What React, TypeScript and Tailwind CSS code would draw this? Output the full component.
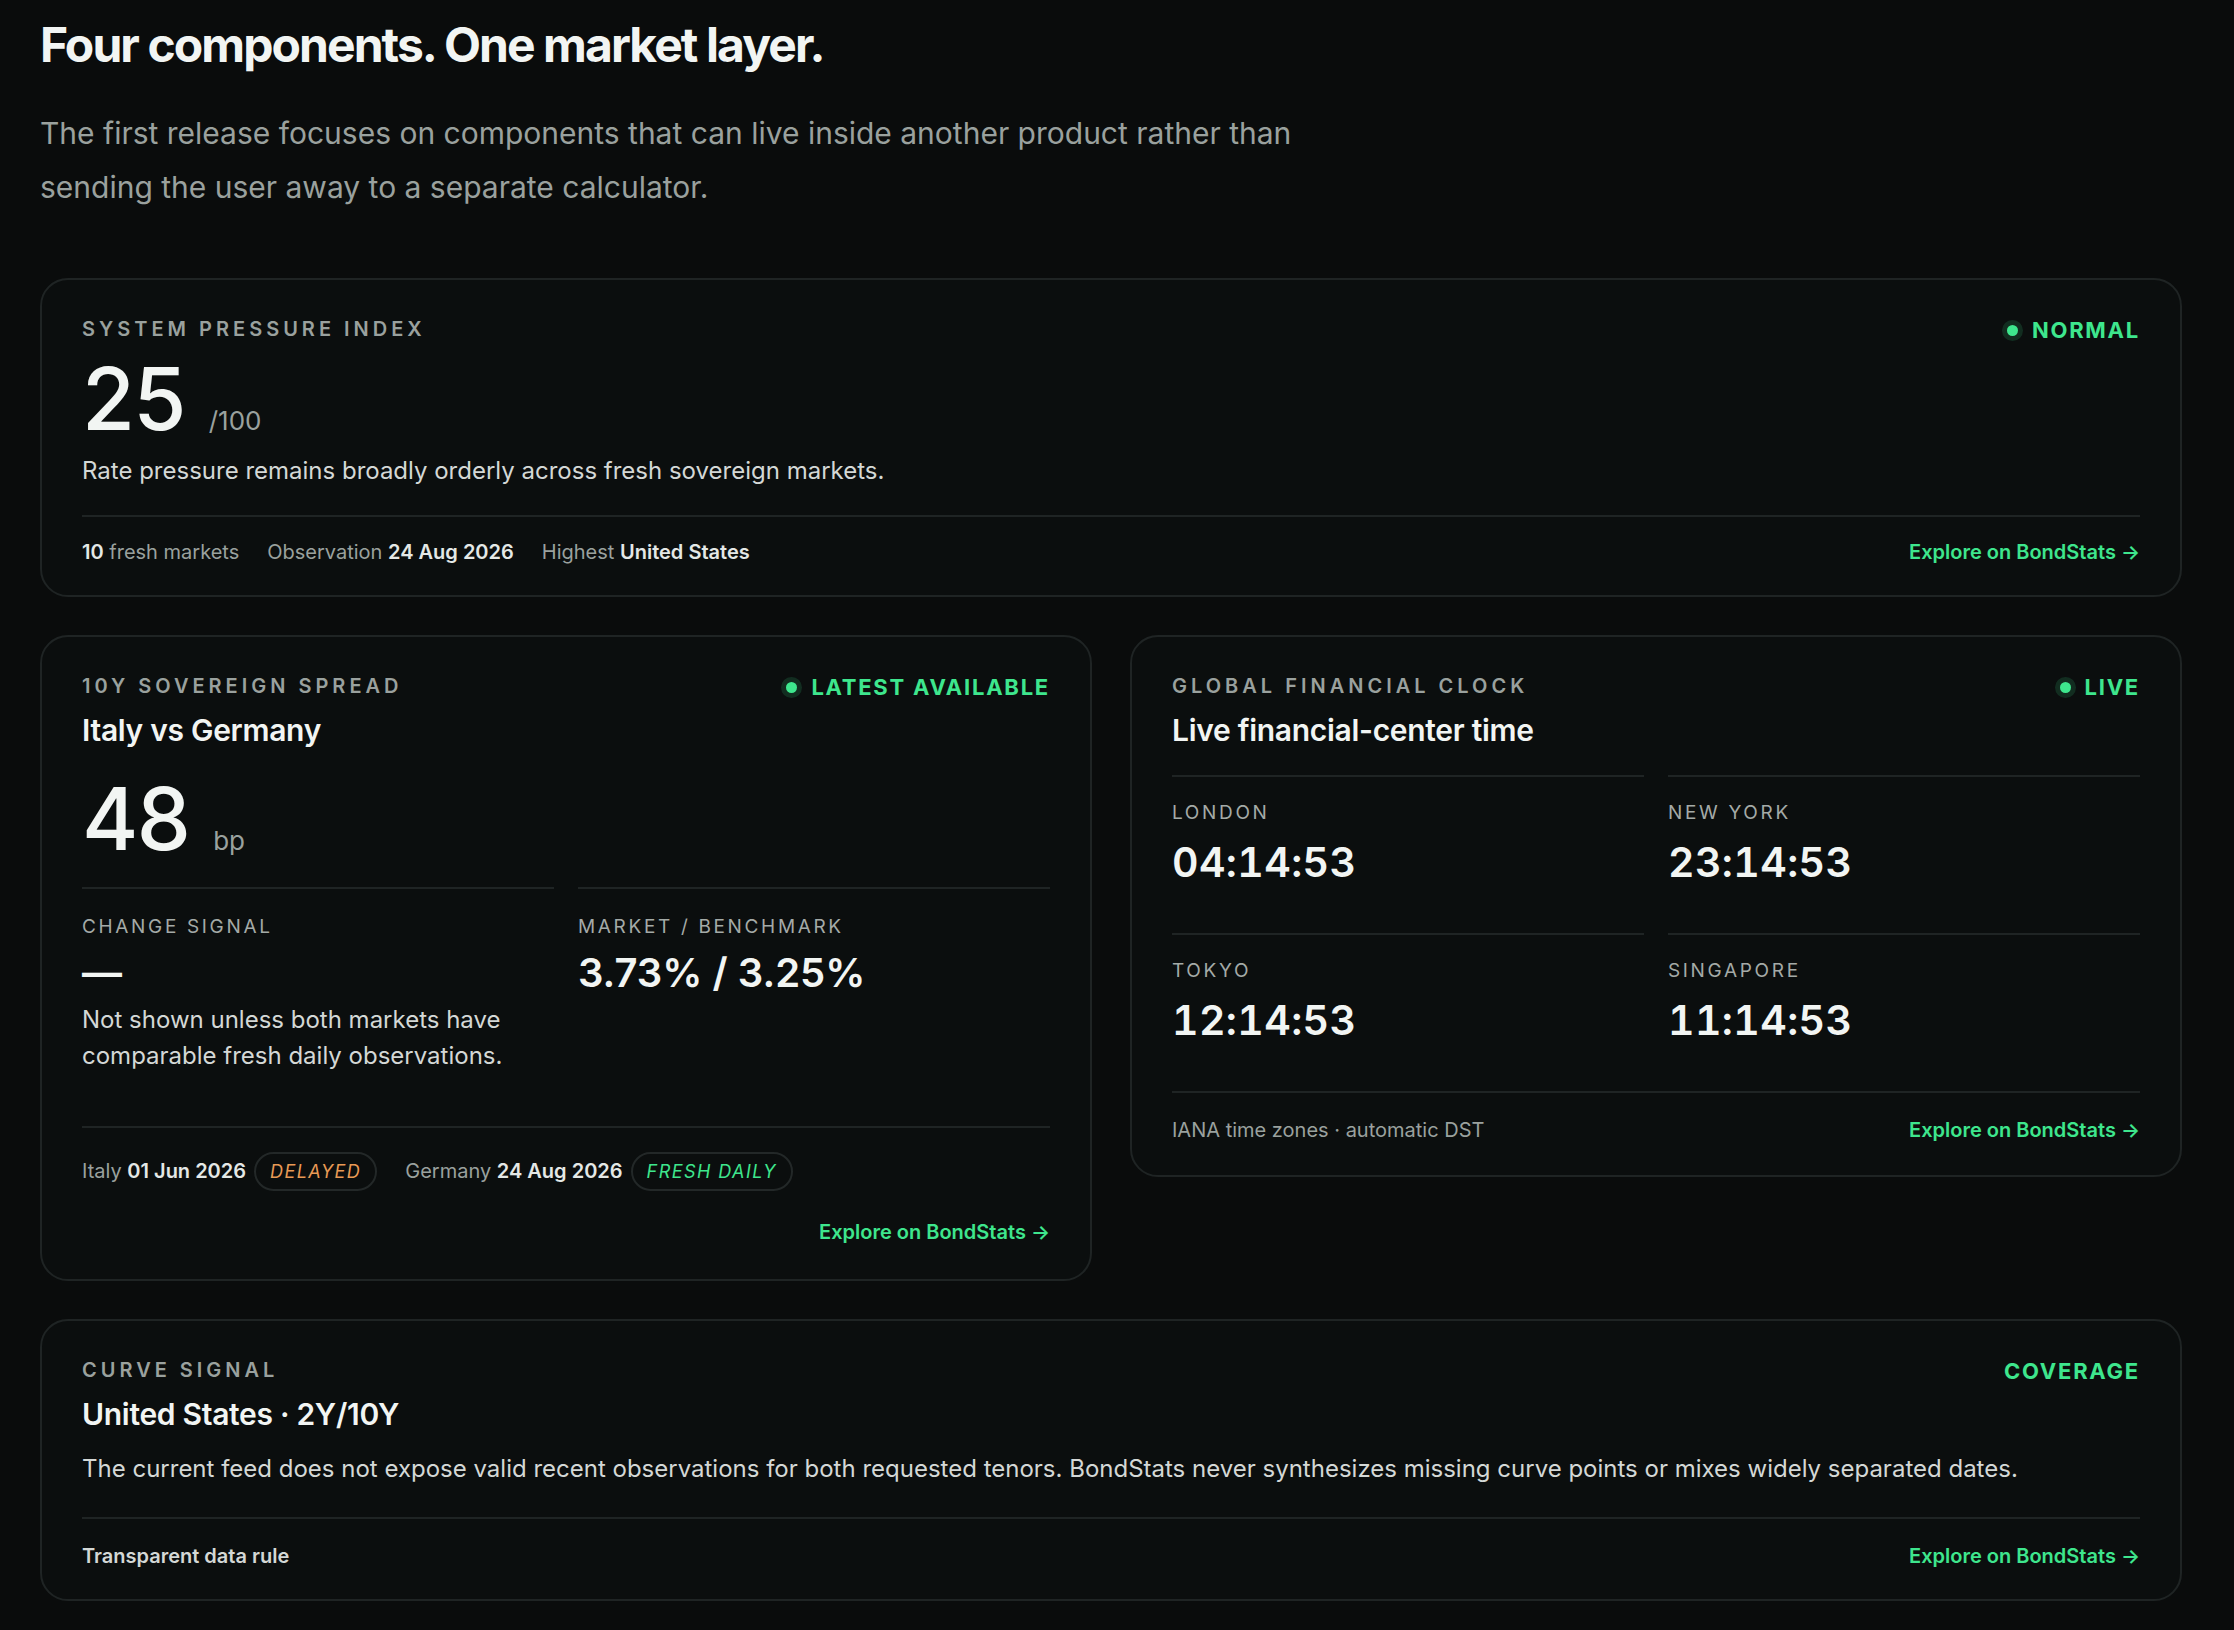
const font = { fontFamily: "Inter, 'Noto Sans', sans-serif" }

function Dot() {
  return <span className="inline-block h-[11px] w-[11px] rounded-full bg-[#3ee68d] ring-[5px] ring-[#3ee68d]/15" />
}

function Status({ text }: { text: string }) {
  return (
    <div className="flex items-center gap-[14px] text-[22px] font-bold tracking-[0.08em] text-[#3ee68d]">
      <Dot />
      {text}
    </div>
  )
}

function Label({ children }: { children: React.ReactNode }) {
  return <div className="text-[20px] font-semibold uppercase tracking-[0.2em] text-[#9aa19e]">{children}</div>
}

function Explore() {
  return <a className="text-[20px] font-semibold text-[#3ee68d]">Explore on BondStats →</a>
}

function Card({ children, className = "" }: { children: React.ReactNode; className?: string }) {
  return (
    <div className={`rounded-[28px] border-2 border-[#1f2424] bg-[#0b0e0e] px-[40px] ${className}`}>
      {children}
    </div>
  )
}

function SubLabel({ children }: { children: React.ReactNode }) {
  return <div className="text-[19px] uppercase tracking-[0.14em] text-[#a4aaa7]">{children}</div>
}

function Clock({ city, time }: { city: string; time: string }) {
  return (
    <div className="border-t-2 border-[#1f2424] pt-[22px] pb-[40px]">
      <SubLabel>{city}</SubLabel>
      <div className="mt-[4px] text-[41px] font-semibold tracking-[0.01em] text-[#f2f5f3] tabular-nums">{time}</div>
    </div>
  )
}

function Pill({ text, color }: { text: string; color: string }) {
  return (
    <span className={`ml-[8px] rounded-full border-2 border-[#232828] px-[14px] py-[4px] text-[18px] italic tracking-[0.08em] ${color}`}>
      {text}
    </span>
  )
}

export default function App() {
  return (
    <div style={font} className="min-h-[1630px] bg-[#0a0c0c] pl-[40px] pr-[52px] pt-[14px] pb-[14px] text-[#f2f5f3]">
      <h1 className="text-[48px] font-bold tracking-[-0.04em] leading-[62px]">Four components. One market layer.</h1>
      <p className="mt-[30px] max-w-[1340px] text-[30px] leading-[54px] text-[#9aa19e]">
        The first release focuses on components that can live inside another product rather than sending the user away to a separate calculator.
      </p>

      <div className="mt-[64px] flex flex-col gap-[38px]">
        <Card className="pt-[34px] pb-[28px]">
          <div className="flex items-start justify-between">
            <Label>System Pressure Index</Label>
            <Status text="NORMAL" />
          </div>
          <div className="mt-[4px] flex items-baseline gap-[24px]">
            <span className="text-[86px] font-medium leading-[96px] tracking-[-0.02em]">25</span>
            <span className="text-[26px] text-[#9aa19e]">/100</span>
          </div>
          <p className="mt-[6px] text-[24px] text-[#d4d8d6]">Rate pressure remains broadly orderly across fresh sovereign markets.</p>
          <div className="mt-[26px] flex items-center justify-between border-t-2 border-[#1f2424] pt-[20px] text-[20px] text-[#9aa19e]">
            <div className="flex gap-[28px]">
              <span><b className="font-semibold text-[#e4e8e6]">10</b> fresh markets</span>
              <span>Observation <b className="font-semibold text-[#e4e8e6]">24 Aug 2026</b></span>
              <span>Highest <b className="font-semibold text-[#e4e8e6]">United States</b></span>
            </div>
            <Explore />
          </div>
        </Card>

        <div className="grid grid-cols-2 items-start gap-[38px]">
          <Card className="pt-[34px] pb-[32px]">
            <div className="flex items-start justify-between">
              <Label>10Y Sovereign Spread</Label>
              <Status text="LATEST AVAILABLE" />
            </div>
            <div className="mt-[4px] text-[30px] font-semibold tracking-[-0.01em]">Italy vs Germany</div>
            <div className="mt-[18px] flex items-baseline gap-[24px]">
              <span className="text-[86px] font-medium leading-[96px] tracking-[-0.02em]">48</span>
              <span className="text-[26px] text-[#9aa19e]">bp</span>
            </div>
            <div className="mt-[20px] grid grid-cols-2 gap-[24px]">
              <div className="border-t-2 border-[#1f2424] pt-[24px]">
                <SubLabel>Change signal</SubLabel>
                <div className="mt-[6px] text-[40px] font-semibold leading-[50px]">—</div>
                <p className="mt-[4px] text-[24px] leading-[36px] text-[#d4d8d6]">Not shown unless both markets have comparable fresh daily observations.</p>
              </div>
              <div className="border-t-2 border-[#1f2424] pt-[24px]">
                <SubLabel>Market / Benchmark</SubLabel>
                <div className="mt-[6px] text-[40px] font-semibold leading-[50px]">3.73% / 3.25%</div>
              </div>
            </div>
            <div className="mt-[52px] border-t-2 border-[#1f2424] pt-[24px] text-[20px] text-[#9aa19e]">
              <div className="flex items-center gap-[28px]">
                <span className="flex items-center">Italy&nbsp;<b className="font-semibold text-[#e4e8e6]">01 Jun 2026</b><Pill text="DELAYED" color="text-[#e89a55]" /></span>
                <span className="flex items-center">Germany&nbsp;<b className="font-semibold text-[#e4e8e6]">24 Aug 2026</b><Pill text="FRESH DAILY" color="text-[#3ee68d]" /></span>
              </div>
              <div className="mt-[26px] flex justify-end"><Explore /></div>
            </div>
          </Card>

          <Card className="pt-[34px] pb-[30px]">
            <div className="flex items-start justify-between">
              <Label>Global Financial Clock</Label>
              <Status text="LIVE" />
            </div>
            <div className="mt-[4px] text-[30px] font-semibold tracking-[-0.01em]">Live financial-center time</div>
            <div className="mt-[22px] grid grid-cols-2 gap-x-[24px]">
              <Clock city="London" time="04:14:53" />
              <Clock city="New York" time="23:14:53" />
              <Clock city="Tokyo" time="12:14:53" />
              <Clock city="Singapore" time="11:14:53" />
            </div>
            <div className="flex items-center justify-between border-t-2 border-[#1f2424] pt-[22px] text-[20px] text-[#9aa19e]">
              <span>IANA time zones · automatic DST</span>
              <Explore />
            </div>
          </Card>
        </div>

        <Card className="pt-[34px] pb-[28px]">
          <div className="flex items-start justify-between">
            <Label>Curve Signal</Label>
            <span className="text-[22px] font-bold tracking-[0.08em] text-[#3ee68d]">COVERAGE</span>
          </div>
          <div className="mt-[4px] text-[30px] font-semibold tracking-[-0.01em]">United States · 2Y/10Y</div>
          <p className="mt-[14px] text-[24px] text-[#d4d8d6]">
            The current feed does not expose valid recent observations for both requested tenors. BondStats never synthesizes missing curve points or mixes widely separated dates.
          </p>
          <div className="mt-[30px] flex items-center justify-between border-t-2 border-[#1f2424] pt-[22px] text-[20px]">
            <span className="font-semibold text-[#d4d8d6]">Transparent data rule</span>
            <Explore />
          </div>
        </Card>
      </div>
    </div>
  )
}
